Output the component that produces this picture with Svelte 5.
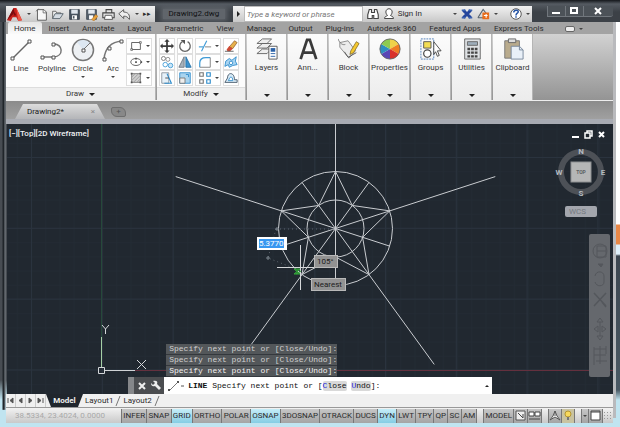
<script>
	const tabs = [
		'Home', 'Insert', 'Annotate', 'Layout', 'Parametric', 'View', 'Manage',
		'Output', 'Plug-ins', 'Autodesk 360', 'Featured Apps', 'Express Tools'
	];

	const quick = ['new', 'open', 'save', 'saveas', 'print', 'undo'];
	const drawTools = ['Line', 'Polyline', 'Circle', 'Arc'];
	const shapes = ['rect', 'ellipse', 'hatch'];
	const modify = [
		['move', 'rotate', 'trim', 'erase'],
		['copy', 'mirror', 'fillet', 'explode'],
		['stretch', 'scale', 'array', 'offset']
	];
	const panels = ['Layers', 'Ann...', 'Block', 'Properties', 'Groups', 'Utilities', 'Clipboard'];
	const history = [0, 1, 2];
	const layouts = ['Layout1', 'Layout2'];

	const toggles = [
		'INFER', 'SNAP', 'GRID', 'ORTHO', 'POLAR', 'OSNAP', '3DOSNAP', 'OTRACK',
		'DUCS', 'DYN', 'LWT', 'TPY', 'QP', 'SC', 'AM'
	];
	let active = $state(['GRID', 'OSNAP', 'DYN']);
	let distance = $state('5.3770');
	let search = $state('');

	function toggle(name) {
		active = active.includes(name) ? active.filter((n) => n !== name) : [...active, name];
	}

	// Ten spokes at 36 degrees, every second one runs out past the circle
	const cx = 335.5;
	const cy = 228.5;
	function at(deg, r) {
		const a = (deg * Math.PI) / 180;
		return [cx + r * Math.sin(a), cy - r * Math.cos(a)];
	}
	const spokes = Array.from({ length: 10 }, (_, i) => at(i * 36, i % 2 ? 57 : 168));
	const star = Array.from({ length: 10 }, (_, i) => at(i * 36, i % 2 ? 28.5 : 57).join(',')).join(' ');

	// 16px glyphs
	const small = {
		new: '<path d="M3 2h8l3 3v10H3z" fill="#f7f7f7" stroke="#444"/><path d="M1 4l4-3M10 2v4h4" fill="none" stroke="#666"/>',
		open: '<path d="M2 13V4h4l1 2h5v2" fill="#eee" stroke="#555"/><path d="M2 13l3-6h10l-4 6z" fill="#d5dce3" stroke="#4b5963"/>',
		save: '<path d="M2 2h12v12H2z" fill="#46525f" stroke="#36404c"/><path d="M4 2h8v5H4z" fill="#dde4ec"/><path d="M5 9h6v5H5z" fill="#fff"/><path d="M6 10h2v3H6z" fill="#46525f"/>',
		saveas: '<path d="M2 2h12v12H2z" fill="#56616d" stroke="#3e4854"/><path d="M4 2h8v5H4z" fill="#e6ebf0"/><path d="M5 9h5v5H5z" fill="#fff"/><path d="M8 14l5-6 3 2-5 6z" fill="#e8a13a" stroke="#a4621a" stroke-width=".5"/>',
		print: '<path d="M5 6V2h7v4M1 6h14v6H1z" fill="#e6e6e6" stroke="#444" stroke-width="1.3"/><path d="M4 9h8l1 5H3z" fill="#fff" stroke="#444"/>',
		undo: '<path d="M1 7l6-5v3c5 0 8 3 7 9-2-3-4-4-7-4v3z" fill="#eee" stroke="#444"/>',
		rect: '<path d="M3 4h10v8H3z" fill="none" stroke="#555"/><path d="M2 11h2v2H2zM12 3h2v2h-2z" fill="#fff" stroke="#555" stroke-width=".8"/>',
		ellipse: '<ellipse cx="8" cy="8" rx="6" ry="4" fill="none" stroke="#555"/><path d="M7 7h2v2H7zM13 7h2v2h-2zM7 3h2v2H7z" fill="#555"/>',
		hatch: '<path d="M3 3h10v10H3z" fill="#cfcfcf" stroke="#777"/><path d="M3 7l4-4M3 11l8-8M5 13l8-8M9 13l4-4" stroke="#999"/><path d="M2 2h2v2H2zM12 2h2v2h-2zM2 12h2v2H2zM12 12h2v2h-2z" fill="#555"/>',
		move: '<path d="M8 0l3 3H9v4h4V5l3 3-3 3V9H9v4h2l-3 3-3-3h2V9H3v2L0 8l3-3v2h4V3H5z" fill="#3c3c3c"/>',
		rotate: '<path d="M5 3a6 6 0 1 0 6 0" fill="none" stroke="#666" stroke-width="1.5"/><path d="M3 1h5v5z" fill="#555"/>',
		trim: '<path d="M1 9h5" stroke="#3f9bd6" stroke-width="1.3"/><path d="M4 14L10 2" stroke="#3f9bd6" stroke-width="1.3"/><path d="M8 9h7" stroke="#777"/>',
		erase: '<path d="M6 9l6-7 3 2-5 7z" fill="#e7b04b" stroke="#7a4a1d" stroke-width=".7"/><path d="M3 12l3-4 4 3-3 3H4z" fill="#cf4a35"/><path d="M1 14h10" stroke="#555"/>',
		copy: '<circle cx="4" cy="4" r="2.3" fill="none" stroke="#777"/><circle cx="9" cy="5" r="2.3" fill="none" stroke="#888"/><circle cx="6" cy="11" r="2.6" fill="none" stroke="#3f9bd6"/><circle cx="12" cy="12" r="2.6" fill="#cbe5f6" stroke="#3f9bd6"/>',
		mirror: '<path d="M7 2v12H1z" fill="#a7b2bb" stroke="#6b7680"/><path d="M9 2v12h6z" fill="#3d93cf" stroke="#2470a5"/>',
		fillet: '<path d="M2 14V9c0-4 3-6 7-6h5" fill="none" stroke="#3f9bd6" stroke-width="1.4"/><path d="M2 14h12V3" fill="none" stroke="#777"/>',
		explode: '<path d="M2 7l4-3 3 2 5-4-1 5 2 4-5 1-4 2-1-3-4 2z" fill="#a8d4f1" stroke="#2e8ccb"/><circle cx="8" cy="9" r="2" fill="#fff" stroke="#2e8ccb"/>',
		stretch: '<path d="M2 2h8v12H2z" fill="#e6f1f9" stroke="#8a949c"/><path d="M8 3l5 11H5" fill="none" stroke="#2e8ccb" stroke-width="1.3"/><path d="M6 8h4" stroke="#444"/>',
		scale: '<path d="M2 2h12v12H2z" fill="#a9d4ef" stroke="#2e8ccb"/><path d="M2 8h6v6H2z" fill="#eee" stroke="#777"/><path d="M9 4h3v3" fill="none" stroke="#2e8ccb"/>',
		array: '<path d="M2 2h4v4H2zM2 10h4v4H2z" fill="#fff" stroke="#777" stroke-width="1.3"/><path d="M10 2h4v4h-4zM10 10h4v4h-4z" fill="#fff" stroke="#2e8ccb" stroke-width="1.3"/>',
		offset: '<path d="M1 13h14v-3h-3c0-9-8-9-8-2L1 13z" fill="#d9ecf8" stroke="#456"/><path d="M5 11h5c0-5-3-5-4-2z" fill="#fff" stroke="#2e8ccb"/>'
	};

	// 24px glyphs
	const large = {
		Line: '<path d="M3 21L21 3" stroke="#666" stroke-width="1.4"/><path d="M2 19h3v3H2zM19 2h3v3h-3z" fill="#fff" stroke="#555"/>',
		Polyline: '<path d="M3 19h11c10-1 9-13 0-13" fill="none" stroke="#777" stroke-width="1.5"/><path d="M1 18h3v3H1zM12 18h3v3h-3zM12 5h3v3h-3z" fill="#fff" stroke="#555"/>',
		Circle: '<circle cx="12" cy="12" r="10.5" fill="#edf0f3" stroke="#777" stroke-width="1.5"/><path d="M12 12L19 5a10 10 0 0 0-13-1z" fill="#dce7f2"/><path d="M12 12l7-7" stroke="#777"/><path d="M11 11h3v3h-3z" fill="#fff" stroke="#555"/>',
		Arc: '<path d="M3 21C4 10 10 4 21 3" fill="none" stroke="#777" stroke-width="1.5"/><path d="M2 20h3v3H2zM7 9h3v3H7zM19 2h3v3h-3z" fill="#fff" stroke="#555"/>',
		Layers: '<path d="M1 17l6-5h10l-5 5zM1 11l6-5h10l-5 5zM1 6l6-5h10l-5 5z" fill="#eee" stroke="#666"/><path d="M14 9h9v14h-9z" fill="#fff" stroke="#555"/><path d="M16 11h5v4h-5z" fill="#2b62a8"/><path d="M16 17h5M16 20h5" stroke="#2b62a8"/>',
		'Ann...': '<path d="M4 23L11 2h3l7 21M7 16h11" fill="none" stroke="#3a3a3a" stroke-width="3"/>',
		Block: '<path d="M2 5l9-2 8 11-7 8L2 10z" fill="#ececec" stroke="#888"/><path d="M0 1c2 5 5 7 8 6" fill="none" stroke="#777"/><path d="M14 14l6-10 3 2-6 10-4 2z" fill="#f5c82e" stroke="#7b6523" stroke-width=".8"/><path d="M7 15l4 6 9-5" fill="none" stroke="#555"/>',
		Properties: '<path d="M12 12V1a11 11 0 0 1 9.5 5.5z" fill="#efd24a"/><path d="M12 12l9.500-5.500a11 11 0 0 1 0 11z" fill="#ef7d22"/><path d="M12 12l9.500 5.500A11 11 0 0 1 12 23z" fill="#d8312b"/><path d="M12 12v11a11 11 0 0 1-9.500-5.500z" fill="#5a46b5"/><path d="M12 12l-9.500 5.500a11 11 0 0 1 0-11z" fill="#2e8fbf"/><path d="M12 12L2.500 6.500A11 11 0 0 1 12 1z" fill="#8dcb50"/><circle cx="12" cy="12" r="11" fill="none" stroke="#666"/>',
		Groups: '<path d="M1 1h14v22H1z" fill="none" stroke="#4c7cb8" stroke-dasharray="2 1"/><path d="M4 4h8v7H4z" fill="#f2dd55" stroke="#555"/><circle cx="8" cy="17" r="4" fill="#fff" stroke="#444" stroke-width="1.3"/><path d="M15 4l8 10h-4l2 5-2 1-2-5-2 3z" fill="#fff" stroke="#444"/>',
		Utilities: '<path d="M4 1h17v22H4z" fill="#dfe2e5" stroke="#666"/><path d="M7 4h11v4H7z" fill="#9dadba" stroke="#666"/><path d="M7 12h3m1 0h3m1 0h3M7 16h3m1 0h3m1 0h3M7 20h3m1 0h3m1 0h3" stroke="#444" stroke-width="2.5"/>',
		Clipboard: '<path d="M3 3h16v19H3z" fill="#b9ab8d" stroke="#777"/><path d="M7 1h8v4H7z" fill="#ddd" stroke="#666"/><path d="M10 9h9l4 4v10H10z" fill="#e9f0f8" stroke="#75869a"/><path d="M19 9v4h4" fill="none" stroke="#75869a"/>'
	};
</script>

<div class="window">
	<header class="titlebar">
		<div class="quick">
			<button class="app" aria-label="Application menu">
				<svg width="15" height="15" viewBox="0 0 16 16">
					<path d="M0 14L7 1h3l6 13-4 1-2-4H6l-2 4z" fill="#c7201c" />
					<path d="M7 1l1 5-8 8zM7 9h3L8 5z" fill="#7b0d10" />
					<path d="M10 1l6 13-4 1z" fill="#ee5848" />
				</svg>
			</button>
			<span class="arrow"></span>
			{#each quick as name}
				<button aria-label={name}>
					<svg width="13" height="13" viewBox="0 0 16 16">{@html small[name]}</svg>
				</button>
			{/each}
			<span class="arrow"></span>
			<span class="more">▸▸</span>
		</div>
		<div class="doc-name"><span>Drawing2.dwg</span></div>
		<div class="info">
			<span class="play"></span>
			<input type="text" aria-label="Search" placeholder="Type a keyword or phrase" bind:value={search} />
			<button aria-label="Find">
				<svg width="12" height="12" viewBox="0 0 16 16">
					<path d="M3 2h3v4h4V2h3l2 7v5H9v-4H7v4H1V9z" fill="#fff" stroke="#444" stroke-width="1.5" />
				</svg>
			</button>
			<button class="sign">
				<svg width="12" height="12" viewBox="0 0 16 16">
					<path d="M2 14c0-3 3-3 4-4C2 6 4 1 8 1s6 5 2 9c1 1 4 1 4 4z" fill="#fff" stroke="#444" stroke-width="1.3" />
				</svg>
				Sign In
			</button>
			<span class="arrow push"></span>
			<button aria-label="Exchange">
				<svg width="12" height="12" viewBox="0 0 16 16">
					<path d="M3 3l10 10M13 3L3 13" stroke="#24459c" stroke-width="4" />
					<path d="M1 3h5M10 13h5M10 3h5M1 13h5" stroke="#3a62b0" stroke-width="2" />
				</svg>
			</button>
			<button aria-label="Stay connected">
				<svg width="13" height="12" viewBox="0 0 17 16">
					<path d="M1 13L8 2l4 5M1 13h9" fill="none" stroke="#57636e" stroke-width="1.5" />
					<path d="M7 6h9v9H7z" fill="#e86d1c" />
					<path d="M9 10h5M12 8v5" stroke="#fff" stroke-width="1.5" />
				</svg>
			</button>
			<span class="arrow"></span>
			<button aria-label="Help" class="help">
				<svg width="12" height="12" viewBox="0 0 16 16">
					<circle cx="8" cy="8" r="7" fill="#fff" stroke="#555" stroke-width="1.3" />
					<path d="M5 6c0-4 6-4 6-1 0 2-3 2-3 5M8 11v2" fill="none" stroke="#2554a5" stroke-width="2" />
				</svg>
			</button>
			<span class="arrow"></span>
		</div>
		<div class="controls">
			<button aria-label="Minimize"><svg width="10" height="10"><path d="M1 6h8v2H1z" fill="#fff" /></svg></button>
			<button aria-label="Maximize"><svg width="10" height="10"><path d="M2 2h6v5H2z" fill="none" stroke="#fff" stroke-width="2" /></svg></button>
			<button aria-label="Close" class="wide"><svg width="10" height="10"><path d="M2 2l6 6M8 2L2 8" stroke="#fff" stroke-width="2" /></svg></button>
		</div>
	</header>

	<nav class="tabs">
		{#each tabs as tab, i}
			<button class:current={i === 0}>{tab}</button>
		{/each}
		<button class="minimize" aria-label="Minimize ribbon">
			<span class="pill"></span><span class="arrow"></span>
		</button>
	</nav>

	<section class="ribbon">
		<div class="panel draw">
			<div class="tools">
				<div class="big">
					{#each drawTools as tool}
						<button>
							<svg width="24" height="24" viewBox="0 0 24 24">{@html large[tool]}</svg>
							{tool}
							{#if tool === 'Circle' || tool === 'Arc'}<span class="arrow"></span>{/if}
						</button>
					{/each}
				</div>
				<div class="column">
					{#each shapes as name}
						<button class="cell split" aria-label={name}>
							<svg width="14" height="14" viewBox="0 0 16 16">{@html small[name]}</svg>
							<span class="arrow"></span>
						</button>
					{/each}
				</div>
			</div>
			<button class="panel-name">Draw <span class="arrow large"></span></button>
		</div>
		<div class="panel modify">
			<div class="tools rows">
				{#each modify as row}
					<div class="row">
						{#each row as name, i}
							<button class="cell" class:split={i === 2} aria-label={name}>
								<svg width="14" height="14" viewBox="0 0 16 16">{@html small[name]}</svg>
								{#if i === 2}<span class="arrow"></span>{/if}
							</button>
						{/each}
					</div>
				{/each}
			</div>
			<button class="panel-name">Modify <span class="arrow large"></span></button>
		</div>
		{#each panels as name}
			<button class="panel slim">
				<svg width="22" height="22" viewBox="0 0 24 24">{@html large[name]}</svg>
				<span>{name}</span>
				<span class="arrow large bottom"></span>
			</button>
		{/each}
	</section>

	<div class="files">
		<button class="file">Drawing2* <span class="x">×</span></button>
		<button class="add" aria-label="New drawing">+</button>
	</div>

	<main class="canvas">
		<svg class="drawing" viewBox="7 124 606 270" preserveAspectRatio="xMidYMid slice">
			<defs>
				<pattern id="minor" x="31" y="157" width="14.2" height="14.2" patternUnits="userSpaceOnUse">
					<path d="M.5 0v15M0 .5h15" stroke="#232b34" fill="none" />
				</pattern>
				<pattern id="major" x="31" y="157" width="70.8" height="70.8" patternUnits="userSpaceOnUse">
					<path d="M.5 0v71M0 .5h71" stroke="#2a333e" fill="none" />
				</pattern>
			</defs>
			<rect x="7" y="124" width="606" height="270" fill="url(#minor)" />
			<rect x="7" y="124" width="606" height="270" fill="url(#major)" />
			<path d="M101.500 124v213" stroke="#26493a" />
			<path d="M135 370.500h478" stroke="#64303e" />

			<!-- UCS icon -->
			<path d="M101.500 337v30" stroke="#a5cfa5" />
			<path d="M105 370.500h30" stroke="#d0d3d6" />
			<path d="M98.500 367.500h6v6h-6zM102 325l3.500 4 3.500-4M105.500 329v5M137 360l9 9M146 360l-9 9" fill="none" stroke="#d4d7da" />

			<g fill="none" stroke="#c9ccd0">
				<circle {cx} {cy} r="57" />
				<circle {cx} {cy} r="28.500" />
				<polygon points={star} />
				{#each spokes as [x, y]}
					<line x1={cx} y1={cy} x2={x} y2={y} />
				{/each}
			</g>

			<!-- dynamic dimension -->
			<path d="M276 229l59 0M276 229l-8 29 33 13" fill="none" stroke="#5d656e" stroke-dasharray="1 3" />
			<path d="M275 229h4M277 227v4M266 258h4M268 256v4" stroke="#7d858d" />
			<path d="M300.500 245v45M277 267.500h38" stroke="#d5d7d9" />
			<path d="M294 269h6l-6 5h6zM296 274l5-3" fill="#237c2c" stroke="#35a53c" />
		</svg>

		<div class="view-label">[−][Top][2D Wireframe]</div>

		<div class="mdi">
			<button aria-label="Minimize drawing"><svg width="9" height="9"><path d="M1 6h7v2H1z" fill="#fff" /></svg></button>
			<button aria-label="Restore drawing"><svg width="9" height="9"><path d="M3 3V1h5v5H6M1 3h5v5H1z" fill="none" stroke="#fff" stroke-width="1.5" /></svg></button>
			<button aria-label="Close drawing"><svg width="9" height="9"><path d="M2 2l5 5M7 2L2 7" stroke="#fff" stroke-width="2" /></svg></button>
		</div>

		<div class="cube">
			<svg width="52" height="52" viewBox="0 0 52 52">
				<circle cx="26" cy="26" r="20" fill="none" stroke="#4d5157" stroke-width="6" />
				<rect x="16" y="16" width="20" height="20" fill="#b5b6b6" stroke="#8e9092" />
				<g font-size="8" font-weight="700" fill="#b3bac0" text-anchor="middle">
					<text x="26" y="8">N</text>
					<text x="26" y="50">S</text>
					<text x="4" y="29">W</text>
					<text x="48" y="29">E</text>
				</g>
				<text x="26" y="28" font-size="5" font-weight="700" fill="#5c5f63" text-anchor="middle">TOP</text>
			</svg>
			<button class="wcs">WCS</button>
		</div>

		<div class="navbar">
			<svg width="16" height="128" viewBox="0 0 16 128" fill="none" stroke="#54575c">
				<circle cx="8" cy="9" r="7" /><path d="M5 4h9v11H5zM5 9h9" />
				<path d="M6 22h5l-2 3z" fill="#54575c" />
				<path d="M3 34c1-6 9-5 9 0v6c0 5-8 5-9 0" />
				<path d="M2 51l12 13M14 51L2 64M10 60l4 5" stroke-width="1.5" />
				<path d="M8 76l-3 4h6zM8 98l-3-4h6zM2 87l4-3v6zM14 87l-4-3v6zM8 80v14" />
				<path d="M2 105v18M2 107h12M2 113h12M8 104v18M4 119h11M14 104v8" />
			</svg>
		</div>

		<input class="distance" aria-label="Distance" bind:value={distance} />
		<div class="tip angle">105°</div>
		<div class="tip snap">Nearest</div>

		<div class="command">
			<div class="history">
				{#each history as line}
					<div class="past">Specify next point or [Close/Undo]:</div>
				{/each}
			</div>
			<div class="prompt">
				<div class="grip"></div>
				<div class="cmd-tools">
					<button aria-label="Close command line"><svg width="10" height="10"><path d="M2 2l6 6M8 2L2 8" stroke="#eee" stroke-width="2" /></svg></button>
					<button aria-label="Customize"><svg width="11" height="11"><path d="M1 3l2 2 2-2-2-2c4-1 5 1 4 3l4 4-2 2-4-4C2 7 1 5 1 3z" fill="#eee" /></svg></button>
				</div>
				<svg class="cmd-icon" width="20" height="14">
					<path d="M4 11L12 3" stroke="#777" />
					<path d="M2 10h2v2H2zM11 2h2v2h-2z" fill="#555" />
					<path d="M15 7h3" stroke="#555" />
				</svg>
				<div class="cmd-text"><b>LINE</b> Specify next point or [<button><i>C</i>lose</button> <button><i>U</i>ndo</button>]:</div>
				<span class="up"></span>
			</div>
		</div>
	</main>

	<div class="layouts">
		<div class="steps">
			<button aria-label="First"><svg width="9" height="9"><path d="M2 2v5M7 2v5L4 4.500z" stroke="#555" fill="#555" /></svg></button>
			<button aria-label="Previous"><svg width="9" height="9"><path d="M6 2v5L3 4.500z" fill="#555" stroke="#555" /></svg></button>
			<button aria-label="Next"><svg width="9" height="9"><path d="M3 2v5l3-2.500z" fill="#555" stroke="#555" /></svg></button>
			<button aria-label="Last"><svg width="9" height="9"><path d="M7 2v5M2 2v5l3-2.500z" stroke="#555" fill="#555" /></svg></button>
		</div>
		<button class="model">Model</button>
		{#each layouts as name}
			<button class="layout">{name}</button>
			<svg width="6" height="12"><path d="M1 11L5 1" stroke="#777" /></svg>
		{/each}
	</div>

	<footer class="status">
		<div class="coords">38.5334, 23.4024, 0.0000</div>
		<div class="toggles main">
			{#each toggles as name}
				<button class:on={active.includes(name)} aria-pressed={active.includes(name)} onclick={() => toggle(name)}>{name}</button>
			{/each}
		</div>
		<div class="toggles right">
			<button>MODEL</button>
			<button class="icon" aria-label="Quick view layouts"><svg width="13" height="11"><path d="M2 1h9v9H2z" fill="#eee" stroke="#555" /><path d="M4 3l5 5V4" fill="none" stroke="#444" /></svg></button>
			<button class="icon" aria-label="Quick view drawings"><svg width="13" height="11"><path d="M1 2h5v4H1zM7 2h5v4H7z" fill="#fff" stroke="#444" /><path d="M1 9h11" stroke="#444" /></svg></button>
		</div>
		<div class="toggles right">
			<button class="icon" aria-label="Annotation scale"><svg width="12" height="11"><path d="M6 1v5M6 1L4 6 1 10l5-3 5 3-3-4z" fill="#fff" stroke="#555" /></svg></button>
			<button class="icon lit" aria-label="Annotation visibility"><svg width="12" height="11"><circle cx="6" cy="4" r="3" fill="#f8d95c" stroke="#b59632" /><path d="M5 7h2v3H5z" fill="#777" /></svg></button>
		</div>
		<div class="toggles right">
			<button aria-label="Status bar menu"><span class="arrow"></span></button>
			<button class="icon" aria-label="Clean screen"><svg width="13" height="11"><path d="M2 1h9v9H2z" fill="#fff" stroke="#444" /><path d="M2 2h9" stroke="#444" /></svg></button>
		</div>
		<div class="size-grip"></div>
	</footer>
</div>

<style>
	:global(body) {
		background: #3a3f45;
	}

	.window {
		box-sizing: border-box;
		height: 100vh;
		min-height: 400px;
		display: flex;
		flex-direction: column;
		padding: 6px 7px 4px 6px;
		font-family: Roboto, 'Liberation Sans', sans-serif;
		font-size: 8px;
		line-height: 10px;
		color: #2c2c2c;
		background:
			linear-gradient(#14171b, #555b62 4px, #3c4147 12px, #3c4147 22px, transparent 22px),
			linear-gradient(90deg, transparent 2px, #20252a 3px, #20252a 4px, #7d8389 5px, transparent 6px) left / 7px 92% no-repeat,
			linear-gradient(#fff 224px, #e98847 225px, #e98847 244px, #dff0fa 245px, #dff0fa 254px, #3c4650 256px, #4a5964 390px, #c0e4f0 400px) right / 4px 100% no-repeat,
			linear-gradient(#b9babd, #b9babd) right 4px top / 3px 98% no-repeat,
			linear-gradient(#474c52 380px, #c0e4f0 400px);
	}

	button {
		display: flex;
		align-items: center;
		justify-content: center;
		margin: 0;
		padding: 0;
		border: 0;
		background: none;
		font: inherit;
		color: inherit;
		white-space: nowrap;
	}

	svg {
		display: block;
		flex: none;
	}

	.arrow {
		width: 0;
		height: 0;
		border: 2px solid transparent;
		border-top-color: #444;
		border-bottom: 0;
	}

	.arrow.large {
		border-width: 3px 3px 0;
		border-top-color: #222;
	}

	/* Title bar */
	.titlebar {
		height: 16px;
		flex: none;
		display: flex;
	}

	.quick {
		width: 149px;
		box-sizing: border-box;
		padding-right: 4px;
		display: flex;
		align-items: center;
		justify-content: space-between;
		background: linear-gradient(#f1f1f1, #c8c8c8);
	}

	.app {
		width: 17px;
	}

	.more {
		font-size: 7px;
	}

	.doc-name {
		flex: 78 1 0;
		box-sizing: border-box;
		display: flex;
		align-items: center;
		justify-content: center;
	}

	.doc-name span {
		padding: 0 6px;
		color: #101214;
		background: #60656b;
		box-shadow: 0 0 5px 2px #60656b;
	}

	.info {
		flex: 299 1 0;
		min-width: 0;
		box-sizing: border-box;
		display: flex;
		align-items: center;
		gap: 4px;
		padding-right: 2px;
		background: linear-gradient(#f1f1f1, #c8c8c8);
	}

	.play {
		margin-left: 4px;
		border: 3px solid transparent;
		border-left: 3px solid #222;
		border-right: 0;
	}

	.info input {
		flex: 0 1 119px;
		min-width: 0;
		box-sizing: border-box;
		height: 16px;
		padding: 0 2px;
		border: 1px solid #bbb;
		background: #fff;
		font: italic 8px Roboto, sans-serif;
	}

	.info input::placeholder {
		color: #777;
		opacity: 1;
	}

	.sign {
		gap: 3px;
	}

	.push {
		margin-left: auto;
	}

	.help {
		margin-left: 8px;
	}

	.controls {
		flex: 81 1 0;
		display: flex;
		align-items: flex-start;
		justify-content: flex-end;
	}

	.controls button {
		width: 18px;
		height: 11px;
		box-sizing: border-box;
		background: #4c5258;
		border: 1px solid #71777d;
		border-top: 0;
		border-right: 0;
	}

	.controls .wide {
		width: 30px;
		border-radius: 0 0 3px 0;
	}

	/* Ribbon tabs */
	.tabs {
		height: 12px;
		flex: none;
		display: flex;
		gap: 1px;
		padding-left: 2px;
		background: #a3a3a3;
	}

	.tabs button {
		padding: 1px 6px 0;
	}

	.tabs .current {
		background: linear-gradient(#e5e5e5, #fafafa);
		border-radius: 2px 2px 0 0;
	}

	.tabs .minimize {
		margin-left: 8px;
		gap: 4px;
	}

	.pill {
		width: 8px;
		height: 4px;
		border: 1px solid #666;
		border-radius: 2px;
		background: #eee;
	}

	/* Ribbon */
	.ribbon {
		height: 67px;
		flex: none;
		display: flex;
		gap: 2px;
		background: linear-gradient(#d2d2d2, #949494);
		border-bottom: 1px solid #eee;
		box-sizing: border-box;
	}

	.panel {
		display: flex;
		flex-direction: column;
		background: #fcfcfc;
		color: #383838;
		box-shadow: 1px 0 #b5b5b5;
	}

	.draw {
		width: 149px;
	}

	.modify {
		width: 88px;
	}

	.tools {
		flex: 1;
		display: flex;
		justify-content: space-between;
		padding: 4px 3px 0 2px;
	}

	.tools.rows {
		flex-direction: column;
		justify-content: flex-start;
	}

	.big {
		display: flex;
		gap: 4px;
	}

	.big button {
		flex-direction: column;
		justify-content: flex-start;
		gap: 2px;
		min-width: 26px;
	}

	.cell {
		box-sizing: border-box;
		width: 16px;
		height: 16px;
		border: 1px solid #dedede;
		background: #fff;
	}

	.cell.split {
		width: 26px;
		gap: 3px;
	}

	.row {
		display: flex;
		gap: 2px;
	}

	.panel-name {
		height: 13px;
		gap: 5px;
		background: #efefef;
		border-top: 1px solid #ddd;
	}

	.slim {
		width: 39px;
		justify-content: flex-start;
		padding-top: 4px;
		gap: 3px;
		background: linear-gradient(#fcfcfc, #ececec);
	}

	.bottom {
		margin-top: auto;
		margin-bottom: 3px;
	}

	/* File tabs */
	.files {
		height: 18px;
		flex: none;
		display: flex;
		align-items: flex-end;
		gap: 6px;
		padding-left: 9px;
		background: linear-gradient(#8b8b8b, #a0a0a0);
		border-bottom: 5px solid #a8abb3;
	}

	.file {
		height: 15px;
		width: 90px;
		justify-content: space-between;
		padding: 0 10px 0 12px;
		box-sizing: border-box;
		color: #1c1c1c;
		background: linear-gradient(#dcdcdc, #b4b5b8);
		clip-path: polygon(0 100%, 8px 0, calc(100% - 8px) 0, 100% 100%);
	}

	.x {
		color: #888;
	}

	.add {
		width: 15px;
		height: 10px;
		margin-bottom: 2px;
		border: 1px solid #6e6e6e;
		border-radius: 2px 6px;
		background: #888;
		color: #555;
	}

	/* Drawing area */
	.canvas {
		position: relative;
		flex: 1;
		min-height: 0;
		margin-left: 1px;
		overflow: hidden;
		background: #212830;
	}

	.drawing {
		position: absolute;
		width: 100%;
		height: 100%;
	}

	.view-label {
		position: absolute;
		left: 2px;
		top: 5px;
		color: #f0f2f4;
		font-weight: 500;
	}

	.mdi {
		position: absolute;
		right: 7px;
		top: 6px;
		display: flex;
		gap: 4px;
	}

	.cube {
		position: absolute;
		right: 6px;
		top: 22px;
		display: flex;
		flex-direction: column;
		align-items: center;
		gap: 8px;
	}

	.wcs {
		width: 32px;
		height: 11px;
		justify-content: flex-start;
		padding-left: 4px;
		box-sizing: border-box;
		border-radius: 2px;
		background: #a3a6ad;
		color: #747980;
	}

	.navbar {
		position: absolute;
		right: 3px;
		top: 110px;
		bottom: 17px;
		width: 21px;
		display: flex;
		align-items: center;
		justify-content: center;
		border-radius: 2px;
		background: #65686d;
	}

	.distance {
		position: absolute;
		left: 250px;
		top: 113px;
		width: 30px;
		height: 13px;
		box-sizing: border-box;
		padding: 0 1px;
		border: 1px solid #fff;
		background: linear-gradient(#3797f0, #3797f0) 1px 1px / 25px 9px no-repeat #fff;
		color: #fff;
		font: 8px Roboto, sans-serif;
	}

	.tip {
		position: absolute;
		box-sizing: border-box;
		height: 13px;
		padding: 0 2px;
		border: 1px solid #b9b9b9;
		background: #929292;
		color: #1c1c1c;
		line-height: 11px;
	}

	.angle {
		left: 307px;
		top: 131px;
		width: 24px;
	}

	.snap {
		left: 304px;
		top: 154px;
		width: 35px;
	}

	/* Command line */
	.command {
		position: absolute;
		left: 20%;
		right: 20%;
		bottom: 0;
		font-family: 'Liberation Mono', monospace;
	}

	.history {
		width: max-content;
		margin-left: 38px;
	}

	.past {
		padding: 0 0 0 3px;
		background: rgba(92, 95, 98, 0.85);
		border-bottom: 1px solid #34383d;
		color: #d0d0d0;
	}

	.past:last-child {
		color: #f2f2f2;
	}

	.prompt {
		height: 17px;
		display: flex;
		align-items: center;
		background: #fff;
		color: #111;
	}

	.grip {
		align-self: stretch;
		width: 6px;
		background: #85878a;
	}

	.cmd-tools {
		align-self: stretch;
		width: 30px;
		display: flex;
		align-items: center;
		justify-content: space-evenly;
		background: #4b4d50;
	}

	.cmd-icon {
		margin: 0 2px;
	}

	.cmd-text {
		white-space: nowrap;
	}

	.cmd-text button {
		display: inline;
		background: #d9d9d9;
		border-radius: 2px;
	}

	.cmd-text i {
		font-style: normal;
		color: #2222dd;
	}

	.up {
		margin: 0 3px 0 auto;
		border: 2px solid transparent;
		border-bottom-color: #222;
		border-top: 0;
	}

	/* Layout tabs */
	.layouts {
		height: 13px;
		flex: none;
		display: flex;
		align-items: center;
		background: #f0f0f0;
	}

	.steps {
		display: flex;
	}

	.steps button {
		width: 10px;
		height: 13px;
		border-right: 1px solid #ccc;
	}

	.model {
		width: 37px;
		height: 13px;
		background: #20262d;
		color: #eee;
		font-weight: 700;
		clip-path: polygon(0 0, 100% 0, calc(100% - 5px) 100%, 5px 100%);
	}

	.layout {
		padding: 0 2px;
	}

	/* Status bar */
	.status {
		height: 15px;
		flex: none;
		display: flex;
		align-items: center;
		padding-right: 1px;
		background: linear-gradient(#f2f2f2, #c9c9c9);
		border-top: 1px solid #999;
	}

	.coords {
		flex: 0 0 19%;
		box-sizing: border-box;
		padding-left: 9px;
		color: #a9a9a9;
	}

	.toggles {
		display: flex;
	}

	.main,
	.main button {
		flex-grow: 1;
	}

	.toggles button {
		height: 14px;
		padding: 0 1px;
		border-right: 1px solid #777;
		background: linear-gradient(#c6c6c6, #a4a4a4);
	}

	.toggles button:first-child {
		border-left: 1px solid #777;
	}

	.toggles .icon {
		padding: 0;
	}

	.toggles .on {
		background: linear-gradient(#c5edf8, #85cde4);
	}

	.right {
		margin-left: 6px;
	}

	.toggles .lit {
		background: #c9c3a0;
	}

	.size-grip {
		width: 9px;
		height: 10px;
		background: radial-gradient(#999 1px, transparent 1px) 0 0 / 3px 3px;
	}
</style>
